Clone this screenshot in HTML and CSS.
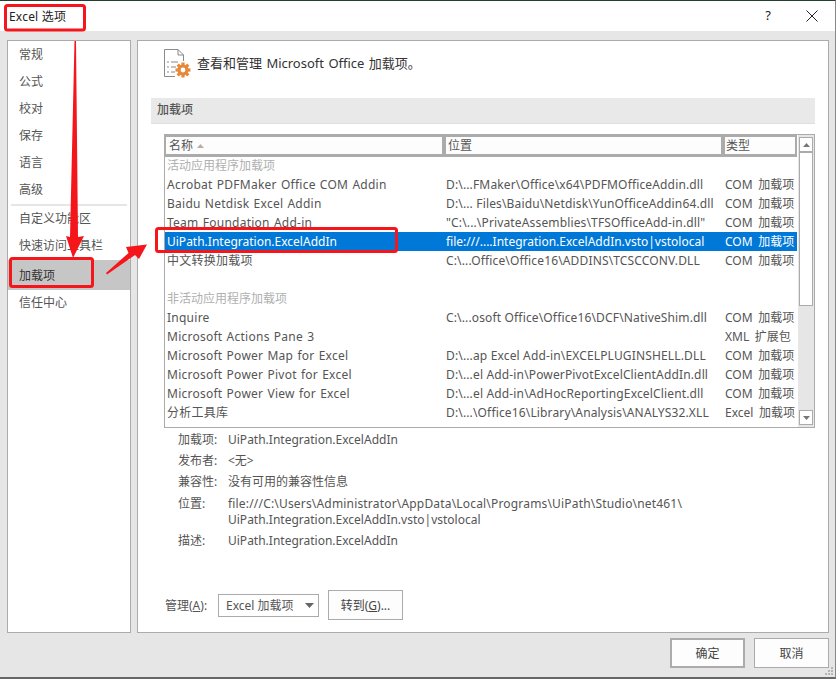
FILE: index.html
```html
<!DOCTYPE html>
<html lang="zh">
<head>
<meta charset="utf-8">
<title>Excel 选项</title>
<link rel="stylesheet" href="styles.css">
</head>
<body>
<div class="window">
  <header class="titlebar">
    <span class="title">Excel 选项</span>
    <div class="title-actions">
      <span class="help">?</span>
      <svg class="close" width="12" height="12" viewBox="0 0 12 12"><path d="M0.5 0.5L11.5 11.5M11.5 0.5L0.5 11.5" stroke="#222" stroke-width="1" fill="none"/></svg>
    </div>
  </header>
  <div class="content">
    <nav class="sidebar">
      <div class="nav-item">常规</div>
      <div class="nav-item">公式</div>
      <div class="nav-item">校对</div>
      <div class="nav-item">保存</div>
      <div class="nav-item">语言</div>
      <div class="nav-item">高级</div>
      <div class="nav-sep"></div>
      <div class="nav-item">自定义功能区</div>
      <div class="nav-item">快速访问工具栏</div>
      <div class="nav-item active">加载项</div>
      <div class="nav-item">信任中心</div>
    </nav>
    <main class="panel">
      <div class="intro">
        <svg class="intro-icon" width="29" height="31" viewBox="0 0 29 31">
          <path d="M1.500 1.500H15L20.500 7V13M15 1.500V7H20.500M1.500 1.500V28.500H12" fill="#fff" stroke="#8a8a8a" stroke-width="1"/>
          <path d="M4 14h2M4 19h2M4 24h2M8 14h7M8 19h5M8 24h4" stroke="#8a8a8a" stroke-width="1"/>
          <g fill="#e58a3a"><circle cx="20" cy="22" r="5.600"/><rect x="18.400" y="14.500" width="3.200" height="15" /><rect x="12.500" y="20.400" width="15" height="3.200"/><rect x="18.400" y="14.500" width="3.200" height="15" transform="rotate(45 20 22)"/><rect x="18.400" y="14.500" width="3.200" height="15" transform="rotate(-45 20 22)"/></g>
          <circle cx="20" cy="22" r="2.400" fill="#fff"/>
        </svg>
        <span class="intro-text">查看和管理 Microsoft Office 加载项。</span>
      </div>
      <div class="section-head">加载项</div>
      <div class="list">
        <div class="list-main">
          <div class="list-head">
            <div class="hcell c1">名称<svg class="sort" width="7" height="4" viewBox="0 0 7 4"><path d="M3.500 0L7 4H0Z" fill="#b5b0a5"/></svg></div>
            <div class="hcell c2">位置</div>
            <div class="hcell c3">类型</div>
          </div>
          <div class="row group">活动应用程序加载项</div>
          <div class="row"><span class="c1">Acrobat PDFMaker Office COM Addin</span><span class="c2">D:\...FMaker\Office\x64\PDFMOfficeAddin.dll</span><span class="c3">COM 加载项</span></div>
          <div class="row"><span class="c1">Baidu Netdisk Excel Addin</span><span class="c2">D:\... Files\Baidu\Netdisk\YunOfficeAddin64.dll</span><span class="c3">COM 加载项</span></div>
          <div class="row"><span class="c1">Team Foundation Add-in</span><span class="c2">"C:\...\PrivateAssemblies\TFSOfficeAdd-in.dll"</span><span class="c3">COM 加载项</span></div>
          <div class="row selected"><span class="c1">UiPath.Integration.ExcelAddIn</span><span class="c2">file:///....Integration.ExcelAddIn.vsto|vstolocal</span><span class="c3">COM 加载项</span></div>
          <div class="row"><span class="c1">中文转换加载项</span><span class="c2">C:\...Office\Office16\ADDINS\TCSCCONV.DLL</span><span class="c3">COM 加载项</span></div>
          <div class="row"></div>
          <div class="row group">非活动应用程序加载项</div>
          <div class="row"><span class="c1">Inquire</span><span class="c2">C:\...osoft Office\Office16\DCF\NativeShim.dll</span><span class="c3">COM 加载项</span></div>
          <div class="row"><span class="c1">Microsoft Actions Pane 3</span><span class="c2"></span><span class="c3">XML 扩展包</span></div>
          <div class="row"><span class="c1">Microsoft Power Map for Excel</span><span class="c2">D:\...ap Excel Add-in\EXCELPLUGINSHELL.DLL</span><span class="c3">COM 加载项</span></div>
          <div class="row"><span class="c1">Microsoft Power Pivot for Excel</span><span class="c2">D:\...el Add-in\PowerPivotExcelClientAddIn.dll</span><span class="c3">COM 加载项</span></div>
          <div class="row"><span class="c1">Microsoft Power View for Excel</span><span class="c2">D:\...el Add-in\AdHocReportingExcelClient.dll</span><span class="c3">COM 加载项</span></div>
          <div class="row"><span class="c1">分析工具库</span><span class="c2">D:\...\Office16\Library\Analysis\ANALYS32.XLL</span><span class="c3">Excel 加载项</span></div>
        </div>
        <div class="scrollbar">
          <div class="sb-btn"><svg width="7" height="4" viewBox="0 0 7 4"><path d="M3.500 0L7 4H0Z" fill="#777"/></svg></div>
          <div class="sb-thumb"></div>
          <div class="sb-track"></div>
          <div class="sb-btn"><svg width="7" height="4" viewBox="0 0 7 4"><path d="M0 0H7L3.500 4Z" fill="#777"/></svg></div>
        </div>
      </div>
      <dl class="details">
        <div class="detail"><dt>加载项:</dt><dd>UiPath.Integration.ExcelAddIn</dd></div>
        <div class="detail"><dt>发布者:</dt><dd>&lt;无&gt;</dd></div>
        <div class="detail"><dt>兼容性:</dt><dd>没有可用的兼容性信息</dd></div>
        <div class="detail two-line"><dt>位置:</dt><dd><span class="path">file:///C:\Users\Administrator\AppData\Local\Programs\UiPath\Studio\net461\</span><br>UiPath.Integration.ExcelAddIn.vsto|vstolocal</dd></div>
        <div class="detail"><dt>描述:</dt><dd>UiPath.Integration.ExcelAddIn</dd></div>
      </dl>
      <div class="manage">
        <span class="manage-label">管理(<u>A</u>):</span>
        <div class="select"><span>Excel 加载项</span><svg width="9" height="5" viewBox="0 0 9 5"><path d="M0 0H9L4.500 5Z" fill="#666"/></svg></div>
        <button class="btn go">转到(<u>G</u>)...</button>
      </div>
    </main>
  </div>
  <footer class="footer">
    <button class="btn primary">确定</button>
    <button class="btn">取消</button>
    <svg class="grip" width="9" height="9" viewBox="0 0 9 9" fill="#b5b5b5"><rect x="6" y="0" width="2" height="2"/><rect x="3" y="3" width="2" height="2"/><rect x="6" y="3" width="2" height="2"/><rect x="0" y="6" width="2" height="2"/><rect x="3" y="6" width="2" height="2"/><rect x="6" y="6" width="2" height="2"/></svg>
  </footer>
</div>
<svg class="annotations" width="836" height="679" viewBox="0 0 836 679">
  <g fill="none" stroke="#f5161c" stroke-width="3">
    <rect x="5.500" y="5.500" width="79" height="24.500" rx="2"/>
    <rect x="10.500" y="258.500" width="82" height="28" rx="2"/>
    <rect x="156.500" y="228.500" width="240" height="23" rx="2"/>
  </g>
  <g fill="#f5161c">
    <path d="M74.500 41L76 41L78 237L84 236L73 258L66 236L70 237Z"/>
    <path d="M106 273L128.500 253L126 247L147 244.500L139 259L135 255L107 274.500Z"/>
  </g>
</svg>
</body>
</html>
```
FILE: styles.css
```css
* { box-sizing: border-box; }
html, body { margin: 0; padding: 0; }
body {
  width: 836px; height: 679px; overflow: hidden; position: relative;
  background: #fff;
  font-family: "Noto Sans", "Noto Sans CJK SC", sans-serif;
  font-size: 12px; color: #444;
}
.window {
  width: 836px; height: 679px;
  border-top: 1px solid #24412f;
  border-right: 1px solid #888;
  border-bottom: 2px solid #666;
  display: flex; flex-direction: column;
  background: #e6e6e6;
}
.titlebar {
  height: 30px; flex: none; background: #fff;
  display: flex; align-items: center; justify-content: space-between;
  padding: 0 17px 0 9px; color: #222; font-size: 12px;
}
.title { letter-spacing: 0.2px; }
.title-actions { display: flex; align-items: center; gap: 35px; }
.help { font-size: 13px; color: #222; line-height: 1; margin-top: -2px; }
.close { display: block; }
.content { display: flex; gap: 6px; padding: 9px 6px 0 7px; height: 602px; flex: none; }
.sidebar {
  width: 124px; height: 593px; background: #fff; border: 1px solid #ababab;
  padding-top: 1px; flex: none;
}
.nav-item { height: 27px; line-height: 26px; padding-left: 11px; color: #555; }
.nav-item.active { background: #c6c6c6; color: #333; height: 30px; line-height: 31px; }
.nav-sep { height: 2px; background: #e6e6e6; margin: 0 3px; }
.panel {
  width: 692px; height: 593px; background: #fff; border: 1px solid #ababab;
  padding: 0 13px; flex: none; display: flex; flex-direction: column;
}
.intro { height: 45px; display: flex; align-items: flex-start; padding: 7px 0 0 12px; gap: 5px; margin-bottom: 12px; }
.intro-icon { display: block; flex: none; }
.intro-text { font-size: 13px; color: #333; word-spacing: 1px; line-height: 16px; margin-top: 7px; }
.section-head {
  height: 26px; background: #e9e9e9; border-bottom: 1px solid #e0e0e0; line-height: 24px;
  padding-left: 6px; font-weight: 500; color: #555; margin-bottom: 10px; width: 664px; flex: none;
}
.list {
  margin-left: 13px; width: 651px; height: 294px; border: 1px solid #ababab;
  display: flex; flex: none;
}
.list-main { width: 632px; flex: none; }
.list-head { height: 22px; display: flex; background: #ababab; padding: 2px 0 2px; margin-bottom: -1px; }
.hcell { background: #fdfdfd; height: 17px; line-height: 16px; padding-left: 2px; color: #555; display: flex; align-items: center; }
.hcell.c1 { width: 276px; margin-left: 1px; padding-left: 3px; }
.hcell.c2 { width: 275px; margin-left: 4px; }
.hcell.c3 { width: 70px; margin-left: 4px; padding-left: 1px; }
.sort { margin-left: 4px; }
.row { height: 19px; line-height: 19px; display: flex; white-space: nowrap; color: #555; }
.row .c1 { width: 279px; padding-left: 2px; flex: none; letter-spacing: 0.25px; word-spacing: 0.8px; }
.row .c2 { width: 279px; padding-left: 2px; flex: none; letter-spacing: 0.15px; }
.row .c3 { width: 74px; padding-left: 2px; flex: none; overflow: hidden; word-spacing: 2.5px; }
.row.group { color: #b0b0b0; padding-left: 2px; }
.row.selected { background: #0078d7; color: #fff; }
.row.selected .c1, .row.selected .c2 { letter-spacing: 0; }
.scrollbar { width: 16px; margin-left: 1px; flex: none; display: flex; flex-direction: column; background: #e6e6e6; padding: 0 1px; }
.sb-btn { height: 15px; background: #fff; border: 1px solid #ababab; display: flex; align-items: center; justify-content: center; flex: none; margin-top: 2px; }
.sb-thumb { height: 154px; background: #fff; border: 1px solid #ababab; flex: none; }
.sb-track { flex: 1; }
.sb-btn:last-child { margin: 0 0 2px; }
.details { margin: 2px 0 0 27px; padding: 0; flex: none; }
.detail { display: flex; line-height: 20px; margin-bottom: 1px; }
.detail dt { width: 50px; flex: none; color: #555; }
.detail dd { margin: 0; color: #555; }
.detail.two-line { line-height: 16px; padding-top: 3px; margin-bottom: 3px; }
.detail.two-line dt { line-height: 16px; }
.path { letter-spacing: 0.18px; }
.manage { display: flex; align-items: center; margin: 38px 0 0 14px; }
.manage-label { color: #555; width: 53px; flex: none; }
.select {
  width: 101px; height: 23px; border: 1px solid #ababab; display: flex; align-items: center;
  justify-content: space-between; padding: 0 4px 0 7px; color: #555; margin-right: 9px;
}
.btn {
  font: inherit; background: #fdfdfd; border: 1px solid #ababab; color: #444;
  width: 75px; height: 30px; padding: 0;
}
.footer { flex: 1; display: flex; align-items: flex-start; justify-content: flex-end; gap: 9px; padding: 5px 6px 0 0; position: relative; }
.footer .btn { width: 75px; height: 30px; }
.footer .btn.primary { border: 2px solid #ababab; }
.grip { position: absolute; right: 1px; bottom: 1px; }
.annotations { position: absolute; left: 0; top: 0; pointer-events: none; }
```
